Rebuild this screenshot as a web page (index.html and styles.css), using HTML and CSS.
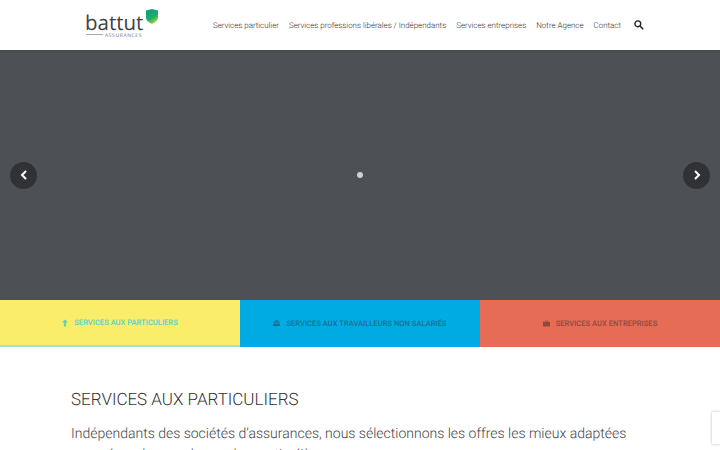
FILE: index.html
```html
<!DOCTYPE html>
<html lang="fr">
<head>
    <meta charset="UTF-8">
    <title>Battut Assurances</title>
    <link rel="stylesheet" href="styles.css">
</head>
<body>
    <header class="header">
        <a class="logo" href="#">
            <span class="logo-name">battut</span>
            <span class="logo-sub"><i class="logo-line"></i>ASSURANCES</span>
            <svg class="logo-shield" width="12" height="15" viewBox="0 0 12 15">
                <defs>
                    <linearGradient id="shield" x1="0.2" y1="0" x2="0.7" y2="1">
                        <stop offset="0" stop-color="#0e9c78"/>
                        <stop offset="0.6" stop-color="#1fae6a"/>
                        <stop offset="1" stop-color="#c6d92e"/>
                    </linearGradient>
                </defs>
                <path d="M0 1.6 L6 0 L12 1.6 V9 Q12 12 6 15 Q0 12 0 9 Z" fill="url(#shield)"/>
            </svg>
        </a>
        <nav class="nav">
            <a href="#">Services particulier</a>
            <a href="#">Services professions libérales / Indépendants</a>
            <a href="#">Services entreprises</a>
            <a href="#">Notre Agence</a>
            <a href="#">Contact</a>
            <svg class="search" width="10" height="10" viewBox="0 0 11 11">
                <circle cx="4.2" cy="4.2" r="3.2" fill="none" stroke="#222" stroke-width="1.5"/>
                <path d="M6.6 6.6 L10.2 10.2" stroke="#222" stroke-width="1.7"/>
            </svg>
        </nav>
    </header>

    <section class="hero">
        <button class="arrow">
            <svg width="8" height="10" viewBox="0 0 8 10"><path d="M6 1 L2 5 L6 9" fill="none" stroke="#fff" stroke-width="2"/></svg>
        </button>
        <span class="dot"></span>
        <button class="arrow">
            <svg width="8" height="10" viewBox="0 0 8 10"><path d="M2 1 L6 5 L2 9" fill="none" stroke="#fff" stroke-width="2"/></svg>
        </button>
    </section>

    <section class="tiles">
        <a class="tile tile-yellow" href="#">
            <svg width="6" height="8" viewBox="0 0 7 8"><path d="M3.5 0 L7 3.4 H4.8 V8 H2.2 V3.4 H0 Z" fill="currentColor"/></svg>
            SERVICES AUX PARTICULIERS
        </a>
        <a class="tile tile-blue" href="#">
            <svg width="7" height="6" viewBox="0 0 8 7"><path d="M4 0 A1.5 1.5 0 0 1 4 3 A1.5 1.5 0 0 1 4 0 Z M1.5 1.5 A1 1 0 0 1 1.5 3.5 A1 1 0 0 1 1.5 1.5 Z M6.5 1.5 A1 1 0 0 1 6.5 3.5 A1 1 0 0 1 6.5 1.5 Z M0 7 V5.6 Q0 4 1.6 4 H6.4 Q8 4 8 5.6 V7 Z" fill="currentColor"/></svg>
            SERVICES AUX TRAVAILLEURS NON SALARIÉS
        </a>
        <a class="tile tile-red" href="#">
            <svg width="7" height="7" viewBox="0 0 8 7"><path d="M2.6 1.4 V0.4 Q2.6 0 3 0 H5 Q5.4 0 5.4 0.4 V1.4 H8 V7 H0 V1.4 Z M3.3 1.4 H4.7 V0.7 H3.3 Z" fill="currentColor" fill-rule="evenodd"/></svg>
            SERVICES AUX ENTREPRISES
        </a>
    </section>

    <main class="content">
        <h2>SERVICES AUX PARTICULIERS</h2>
        <p>Indépendants des sociétés d’assurances, nous sélectionnons les offres les mieux adaptées pour répondre aux demandes particulières.</p>
    </main>

    <div class="recaptcha"></div>
</body>
</html>
```

FILE: styles.css
```css
html, body {
    height: 450px;
    overflow: hidden;
}
body {
    margin: 0;
    font-family: Roboto, "Liberation Sans", sans-serif;
    text-rendering: geometricPrecision;
    background-color: #fff;
}
a {
    text-decoration: none;
}
.header {
    position: relative;
    z-index: 2;
    display: flex;
    justify-content: space-between;
    align-items: center;
    height: 50px;
    padding: 0 76px 0 85px;
    background-color: #fff;
    box-shadow: 0 1px 3px rgba(0,0,0,0.12);
}
.logo {
    position: relative;
    display: block;
    width: 73px;
    height: 40px;
    color: #3f4145;
}
.logo-name {
    position: absolute;
    left: 0;
    top: 9px;
    font-family: "Open Sans", sans-serif;
    font-size: 20.5px;
    line-height: 18px;
}
.logo-sub {
    position: absolute;
    left: 1px;
    top: 28px;
    display: flex;
    align-items: center;
    gap: 2px;
    font-family: "Open Sans", sans-serif;
    font-size: 5px;
    line-height: 6px;
    letter-spacing: 0.6px;
    color: #6a6c70;
}
.logo-line {
    width: 17px;
    height: 1px;
    margin-bottom: 3px;
    background-color: #aaa;
}
.logo-shield {
    position: absolute;
    left: 61px;
    top: 4px;
}
.nav {
    display: flex;
    align-items: center;
    gap: 10px;
}
.nav a {
    font-size: 7.95px;
    font-weight: 300;
    color: #333;
    white-space: nowrap;
}
.search {
    margin-left: 3px;
}
.hero {
    display: flex;
    justify-content: space-between;
    align-items: center;
    height: 250px;
    padding: 0 10px;
    background-color: #4d5055;
}
.arrow {
    display: flex;
    justify-content: center;
    align-items: center;
    width: 27px;
    height: 27px;
    padding: 0;
    border: none;
    border-radius: 50%;
    background-color: #303236;
}
.dot {
    width: 6px;
    height: 6px;
    border-radius: 50%;
    background-color: #d0d0d0;
}
.tiles {
    display: grid;
    grid-template-columns: repeat(3, 1fr);
    height: 47px;
}
.tile {
    display: flex;
    justify-content: center;
    align-items: center;
    gap: 6px;
    font-size: 7.6px;
    font-weight: 500;
    padding-bottom: 1px;
}
.tile-yellow {
    background-color: #f9ed69;
    color: #5fcfc8;
    border-bottom: 2px solid #a5dfd0;
    padding-bottom: 0;
}
.tile-blue {
    background-color: #00abe4;
    color: #1c6f96;
}
.tile-red {
    background-color: #e76c56;
    color: #8f4a3e;
}
.content {
    padding: 43px 71px 0;
}
.content h2 {
    margin: 0 0 14px;
    font-size: 17px;
    font-weight: 300;
    line-height: 20px;
    color: #333;
}
.content p {
    margin: 0;
    font-size: 14px;
    font-weight: 300;
    line-height: 21px;
    color: #444;
}
.recaptcha {
    position: absolute;
    right: 0;
    top: 412px;
    width: 8px;
    height: 32px;
    background-color: #fff;
    box-shadow: 0 0 3px rgba(0,0,0,0.3);
}
```
